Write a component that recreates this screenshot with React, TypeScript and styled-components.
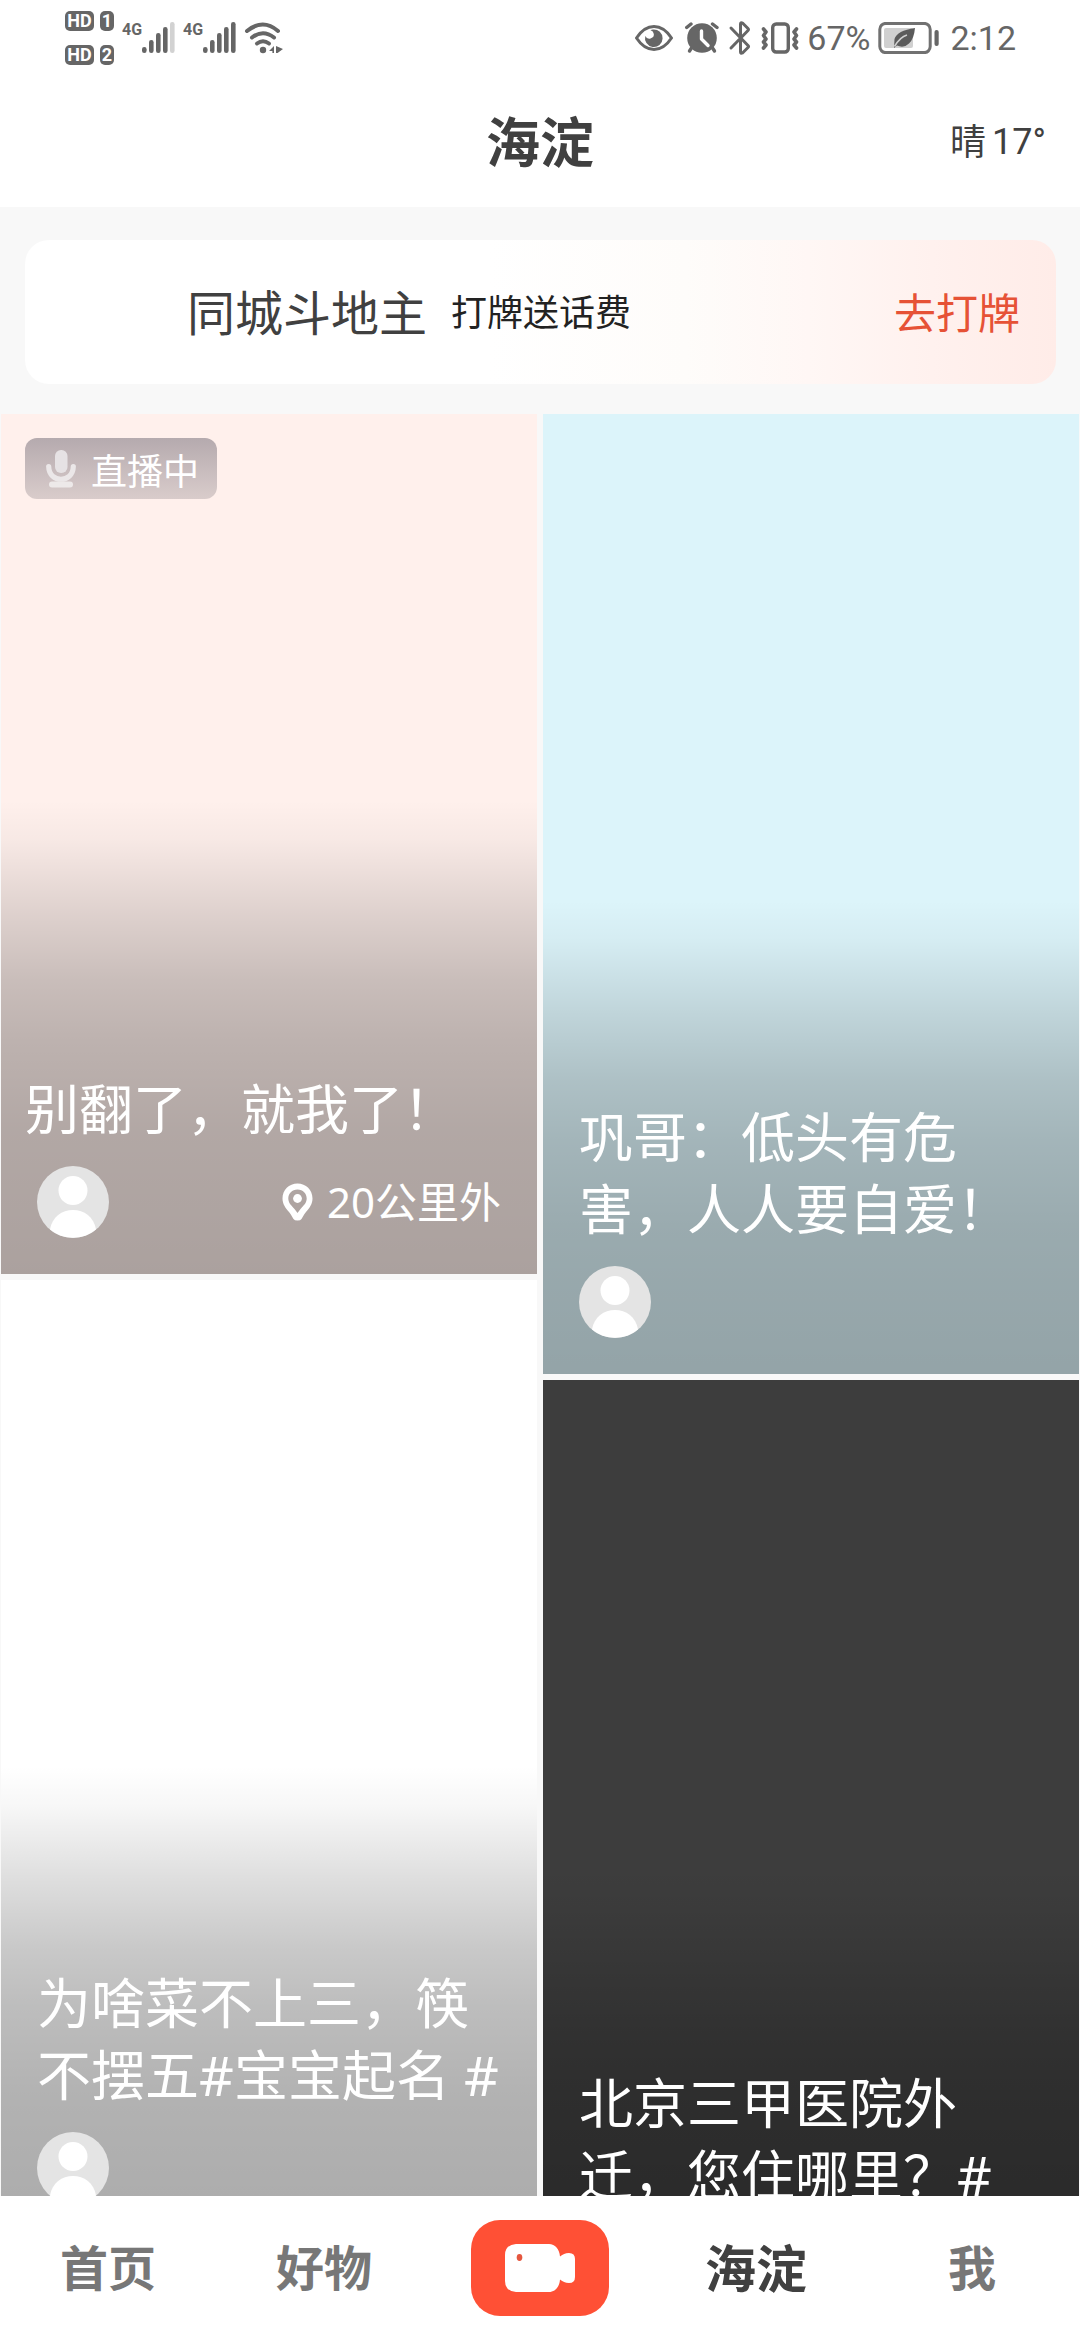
import React from "react";
import styled, { createGlobalStyle } from "styled-components";

const GlobalStyle = createGlobalStyle`
  *, *::before, *::after { box-sizing: border-box; }
  body {
    margin: 0;
    background: #ffffff;
    color: #404040;
    font-family: "Noto Sans", "Noto Sans CJK SC", sans-serif;
  }
  h1, h2, p { margin: 0; font-weight: 400; }
  button {
    margin: 0;
    padding: 0;
    border: 0;
    background: none;
    font-family: inherit;
    color: inherit;
    cursor: pointer;
  }
  svg { display: block; flex: none; }
`;

const Screen = styled.div`
  display: flex;
  flex-direction: column;
  height: 100vh;
  background: #f8f8f8;
`;

const StatusBar = styled.div`
  display: flex;
  align-items: center;
  justify-content: space-between;
  height: 76px;
  padding: 0 64px 0 65px;
  background: #ffffff;
  color: #666666;
`;

const StatusGroup = styled.div`
  display: flex;
  align-items: center;
  gap: 8px;
`;

const SimStack = styled.div`
  display: flex;
  flex-direction: column;
  gap: 14px;
`;

const SimRow = styled.div`
  display: flex;
  align-items: center;
  gap: 6px;
`;

const SimTag = styled.span<{ $width: number }>`
  width: ${(p) => p.$width}px;
  height: 20px;
  border-radius: 5px;
  background: #666666;
  color: #ffffff;
  font: 700 18px/20px Roboto, sans-serif;
  text-align: center;
`;

const Signal = styled.div`
  display: flex;
  align-items: flex-start;
`;

const Network = styled.span`
  font: 700 16px/16px Roboto, sans-serif;
`;

const StatusText = styled.span`
  font: 400 34px/40px Roboto, sans-serif;
`;

const Header = styled.header`
  display: grid;
  grid-template-columns: 1fr auto 1fr;
  align-items: center;
  height: 131px;
  padding: 0 34px;
  background: #ffffff;
`;

const Title = styled.h1`
  grid-column: 2;
  font-size: 54px;
  line-height: 72px;
  font-weight: 700;
`;

const Weather = styled.p`
  justify-self: end;
  display: flex;
  align-items: center;
  gap: 6px;
  font-size: 36px;
  line-height: 48px;
`;

const Temperature = styled.span`
  font-family: Roboto, sans-serif;
`;

const BannerArea = styled.section`
  padding: 33px 24px 30px 25px;
  background: #f8f8f8;
`;

const Banner = styled.div`
  display: flex;
  align-items: center;
  gap: 24px;
  height: 144px;
  padding: 2px 36px 0 162px;
  border-radius: 24px;
  background: linear-gradient(90deg, #ffffff 45%, #fefcfa 64%, #fff7f5 76%, #fff1ee 88%, #ffece8 100%);
`;

const BannerTitle = styled.h2`
  font-size: 48px;
  line-height: 72px;
`;

const BannerNote = styled.p`
  flex: 1;
  font-size: 36px;
  line-height: 48px;
  color: #222222;
`;

const BannerAction = styled.button`
  font-size: 42px;
  line-height: 60px;
  color: #e65236;
`;

const Feed = styled.main`
  flex: 1;
  min-height: 0;
  display: grid;
  grid-template-columns: 1fr 1fr;
  align-items: start;
  gap: 6px;
  padding: 0 1px;
  overflow: hidden;
`;

const Column = styled.div`
  display: flex;
  flex-direction: column;
  gap: 6px;
`;

const Card = styled.article<{ $color: string; $height: number; $live?: boolean }>`
  display: flex;
  flex-direction: column;
  justify-content: space-between;
  height: ${(p) => p.$height}px;
  padding: ${(p) => (p.$live ? "24px 24px 36px" : "24px 36px 36px")};
  color: #ffffff;
  background:
    linear-gradient(
      to top,
      rgba(0, 0, 0, 0.33) 0,
      rgba(0, 0, 0, 0.32) 44px,
      rgba(0, 0, 0, 0.3) 144px,
      rgba(0, 0, 0, 0.26) 234px,
      rgba(0, 0, 0, 0.21) 294px,
      rgba(0, 0, 0, 0.13) 361px,
      rgba(0, 0, 0, 0.03) 434px,
      rgba(0, 0, 0, 0) 474px
    ),
    ${(p) => p.$color};
`;

const LiveBadge = styled.div`
  align-self: flex-start;
  display: flex;
  align-items: center;
  gap: 15px;
  height: 61px;
  padding: 0 18px 0 21px;
  border-radius: 12px;
  background: linear-gradient(#b5aaae, #d9cccb);
  font-family: "Noto Sans CJK SC", sans-serif;
  font-size: 36px;
  line-height: 48px;
`;

const Caption = styled.div`
  display: flex;
  flex-direction: column;
  gap: 21px;
  margin-top: auto;
`;

const CaptionText = styled.h2`
  font-size: 54px;
  line-height: 72px;
`;

const Meta = styled.div<{ $inset?: boolean }>`
  display: flex;
  align-items: center;
  justify-content: space-between;
  padding: ${(p) => (p.$inset ? "0 12px" : "0")};
`;

const Distance = styled.p`
  display: flex;
  align-items: center;
  gap: 14px;
  font-size: 42px;
  line-height: 60px;
`;

const NavBar = styled.nav`
  display: grid;
  grid-template-columns: repeat(5, 1fr);
  align-items: center;
  height: 144px;
  background: #ffffff;
`;

const NavItem = styled.button<{ $active?: boolean }>`
  height: 100%;
  font-size: ${(p) => (p.$active ? 51 : 48)}px;
  line-height: 72px;
  font-weight: 700;
  color: ${(p) => (p.$active ? "#404040" : "#777777")};
`;

const RecordButton = styled.button`
  justify-self: center;
  display: flex;
  align-items: center;
  justify-content: center;
  width: 138px;
  height: 96px;
  border-radius: 29px;
  background: #ff5035;
`;

const SignalBars = ({ level }: { level: number }) => (
  <svg width="33" height="32" viewBox="0 0 33 32" aria-hidden="true">
    {[6, 13, 20, 26, 31].map((h, i) => (
      <rect
        key={h}
        x={i * 7}
        y={31 - h}
        width="4.6"
        height={h}
        rx="2.2"
        fill={i < level ? "#666666" : "#d2d2d2"}
      />
    ))}
  </svg>
);

const SignalBlock = ({ level }: { level: number }) => (
  <Signal>
    <Network>4G</Network>
    <SignalBars level={level} />
  </Signal>
);

const WifiIcon = () => (
  <svg width="40" height="32" viewBox="0 0 40 32" fill="none" stroke="#666666" strokeWidth="4" strokeLinecap="round" aria-hidden="true">
    <path d="M3 9Q19 -4 34 9" />
    <path d="M8 15.5Q19 7 30 15.5" />
    <path d="M13 21.5Q19 17 25 21.5" />
    <circle cx="19" cy="28" r="3.2" fill="#666666" stroke="none" />
    <path d="M25 29L30 24V31H28.4V29ZM32 24L39 27L33.6 31H32Z" fill="#666666" stroke="none" />
  </svg>
);

const EyeIcon = () => (
  <svg width="38" height="28" viewBox="0 0 38 28" aria-hidden="true">
    <path d="M1.5 14Q9 2.5 19 2.5T36.5 14Q29 25.5 19 25.5T1.5 14Z" fill="none" stroke="#666666" strokeWidth="3" strokeLinejoin="round" />
    <path d="M18 5.5A8.8 8.8 0 1 1 10.3 12Q12 15.5 15.5 14.5Q20 13 18.5 9Q18 7 15.5 6.3Q16.5 5.6 18 5.5Z" fill="#666666" />
  </svg>
);

const AlarmIcon = () => (
  <svg width="38" height="32" viewBox="-4 0 38 32" aria-hidden="true">
    <g stroke="#666666" strokeWidth="3.4" strokeLinecap="round" fill="none">
      <path d="M1.7 5.5L6 2M32 5.5L27.5 2" />
      <path d="M6.5 26L4.5 29M27.5 26L29.5 29" />
    </g>
    <circle cx="17" cy="16" r="14.8" fill="#666666" />
    <path d="M16.5 9V17L23 23.5" stroke="#ffffff" strokeWidth="3.4" strokeLinecap="round" strokeLinejoin="round" fill="none" />
  </svg>
);

const BluetoothIcon = () => (
  <svg width="26" height="36" viewBox="0 0 26 36" fill="none" stroke="#666666" strokeWidth="3" strokeLinecap="round" strokeLinejoin="round" aria-hidden="true">
    <path d="M4 8L21 25.5Q22 26.5 21 27.5L15.5 33Q13.5 34 13.5 32V4Q13.5 2 15.5 3L21 8.5Q22 9.5 21 10.5L4 28" />
  </svg>
);

const VibrateIcon = () => (
  <svg width="38" height="32" viewBox="0 0 38 32" fill="none" stroke="#666666" strokeLinecap="round" strokeLinejoin="round" aria-hidden="true">
    <rect x="11.7" y="2" width="15.6" height="28" rx="3.5" strokeWidth="3.4" />
    <path d="M2.5 7L5 10L2.5 13.5L5 17L2.5 20L5 23L2.5 26" strokeWidth="3.6" />
    <path d="M35.5 7L33 10L35.5 13.5L33 17L35.5 20L33 23L35.5 26" strokeWidth="3.6" />
  </svg>
);

const BatteryIcon = () => (
  <svg width="64" height="32" viewBox="0 0 64 32" aria-hidden="true">
    <rect x="1.8" y="1.4" width="50.4" height="29.2" rx="6" fill="none" stroke="#717171" strokeWidth="3" />
    <rect x="6" y="6" width="29" height="20" rx="2" fill="#d0d0d0" />
    <path d="M37 6Q19 8.5 16.5 17L16 26L19 23.5Q26 26.5 31 21.5Q36 17 37 6Z" fill="#5b5b5b" />
    <path d="M16.5 24.5Q22 15 29 13" fill="none" stroke="#d0d0d0" strokeWidth="1.6" />
    <rect x="56.5" y="8" width="4.2" height="16" rx="2" fill="#666666" />
  </svg>
);

const MicIcon = () => (
  <svg width="30" height="38" viewBox="0 0 30 38" aria-hidden="true">
    <rect x="9" y="0" width="12.5" height="23" rx="6" fill="#e6e2e4" />
    <path d="M2.7 16.5C3 33.5 27 33.5 27.3 16.5" fill="none" stroke="#ebe7e8" strokeWidth="5.2" strokeLinecap="round" />
    <rect x="3" y="31.5" width="24" height="6" rx="3" fill="#ede9e9" />
  </svg>
);

const PinIcon = () => (
  <svg width="31" height="38" viewBox="0 0 31 38" aria-hidden="true">
    <path
      fill="#ffffff"
      fillRule="evenodd"
      d="M15.5 0.5C24 0.5 30.5 7 30.5 15.5C30.5 21 27.5 25 24 29C22 31.5 21 33.5 19.5 36Q18.5 37.5 15.5 37.5T11.5 36C10 33.5 9 31.5 7 29C3.5 25 0.5 21 0.5 15.5C0.5 7 7 0.5 15.5 0.5ZM15.5 6.5C10 6.5 6.3 10.5 6.3 15.5C6.3 20 9.5 22.5 12.5 26L15.5 30L18.5 26C21.5 22.5 24.7 20 24.7 15.5C24.7 10.5 21 6.5 15.5 6.5Z"
    />
    <circle cx="15.5" cy="15.5" r="4.4" fill="#ffffff" />
  </svg>
);

const Avatar = () => (
  <svg width="72" height="72" viewBox="0 0 72 72" role="img" aria-label="头像">
    <circle cx="36" cy="36" r="36" fill="#e4e4e4" />
    <circle cx="36" cy="24.5" r="14.5" fill="#ffffff" />
    <path d="M13 63.5C15 51 25 44 36 44S57 51 59 63.5A36 36 0 0 1 13 63.5Z" fill="#ffffff" />
  </svg>
);

const CameraIcon = () => (
  <svg width="70" height="48" viewBox="0 0 70 48" aria-hidden="true">
    <path
      fill="#ffffff"
      d="M11 0H44C50 0 54.5 5 55 12.5C58 10.5 60 9 64 9Q70 9 70 15V33Q70 39 64 39C60 39 58 37.5 55 35.5C54.5 43 50 48 44 48H11Q0 47 0 37V11Q0 1 11 0Z"
    />
    <ellipse cx="14.5" cy="13.5" rx="2.8" ry="3.4" fill="#e5573f" />
  </svg>
);

interface Post {
  text: string;
  color: string;
  height: number;
  live?: boolean;
  distance?: string;
}

const columns: Post[][] = [
  [
    { text: "别翻了，就我了！", color: "#fff0ec", height: 860, live: true, distance: "20公里外" },
    { text: "为啥菜不上三，筷不摆五#宝宝起名 #", color: "#ffffff", height: 960 },
  ],
  [
    { text: "巩哥：低头有危害，人人要自爱！", color: "#dcf4fa", height: 960 },
    { text: "北京三甲医院外迁，您住哪里？#", color: "#3d3d3d", height: 960 },
  ],
];

const PostCard = ({ post }: { post: Post }) => (
  <Card $color={post.color} $height={post.height} $live={post.live}>
    {post.live && (
      <LiveBadge>
        <MicIcon />
        <span>直播中</span>
      </LiveBadge>
    )}
    <Caption>
      <CaptionText>{post.text}</CaptionText>
      <Meta $inset={post.live}>
        <Avatar />
        {post.distance && (
          <Distance>
            <PinIcon />
            <span>{post.distance}</span>
          </Distance>
        )}
      </Meta>
    </Caption>
  </Card>
);

export default function App() {
  return (
    <Screen>
      <GlobalStyle />
      <StatusBar>
        <StatusGroup>
          <SimStack>
            <SimRow>
              <SimTag $width={29}>HD</SimTag>
              <SimTag $width={14}>1</SimTag>
            </SimRow>
            <SimRow>
              <SimTag $width={29}>HD</SimTag>
              <SimTag $width={14}>2</SimTag>
            </SimRow>
          </SimStack>
          <SignalBlock level={4} />
          <SignalBlock level={5} />
          <WifiIcon />
        </StatusGroup>
        <StatusGroup>
          <EyeIcon />
          <AlarmIcon />
          <BluetoothIcon />
          <VibrateIcon />
          <StatusText>67%</StatusText>
          <BatteryIcon />
          <StatusText>2:12</StatusText>
        </StatusGroup>
      </StatusBar>
      <Header>
        <Title>海淀</Title>
        <Weather>
          <span>晴</span>
          <Temperature>17°</Temperature>
        </Weather>
      </Header>
      <BannerArea>
        <Banner>
          <BannerTitle>同城斗地主</BannerTitle>
          <BannerNote>打牌送话费</BannerNote>
          <BannerAction type="button">去打牌</BannerAction>
        </Banner>
      </BannerArea>
      <Feed>
        {columns.map((posts, i) => (
          <Column key={i}>
            {posts.map((post) => (
              <PostCard key={post.text} post={post} />
            ))}
          </Column>
        ))}
      </Feed>
      <NavBar>
        <NavItem type="button">首页</NavItem>
        <NavItem type="button">好物</NavItem>
        <RecordButton type="button" aria-label="拍摄">
          <CameraIcon />
        </RecordButton>
        <NavItem type="button" $active aria-current="page">海淀</NavItem>
        <NavItem type="button">我</NavItem>
      </NavBar>
    </Screen>
  );
}
